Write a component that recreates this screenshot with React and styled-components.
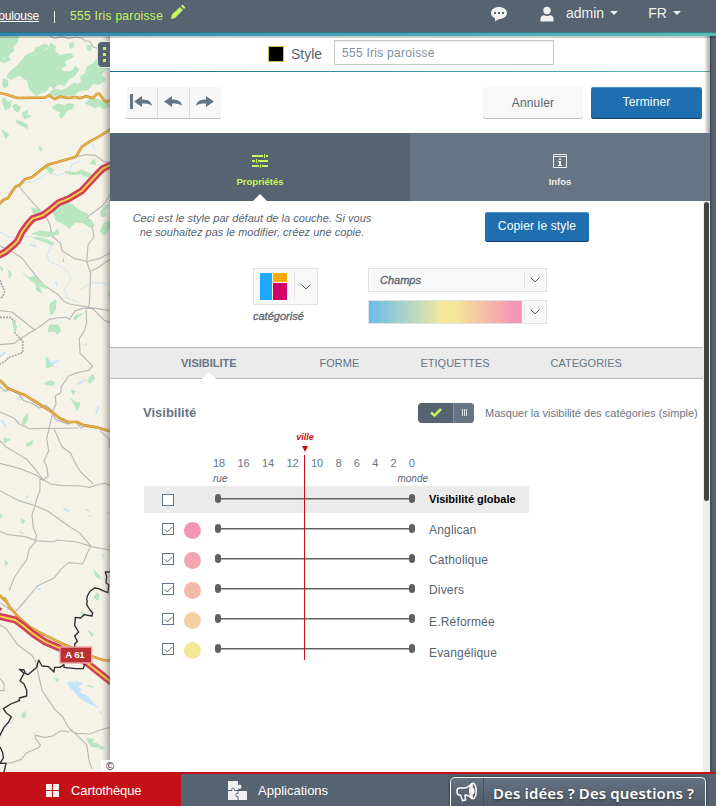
import React from "react";
import styled, { createGlobalStyle, css } from "styled-components";

const SLATE = "#566370";
const SLATE_LIGHT = "#667585";
const LIME = "#c5f560";
const RED = "#c41016";
const BLUE = "#1f6fb0";

const GlobalStyle = createGlobalStyle`
  * { box-sizing: border-box; }
  body {
    margin: 0;
    overflow: hidden;
    font-family: "Liberation Sans", Arial, sans-serif;
    color: ${SLATE};
  }
`;

const Page = styled.div`
  width: 716px;
  height: 806px;
  display: flex;
  flex-direction: column;
  overflow: hidden;
  background: ${SLATE};
`;

/* ---------- header ---------- */

const Header = styled.header`
  position: relative;
  z-index: 2;
  flex: none;
  height: 36px;
  display: flex;
  background: linear-gradient(90deg, #2e86b0, #3f9fb8 45%, #55c0b8) 0 33px / 100% 3px no-repeat,
    linear-gradient(90deg, #2a6f86, #35838a) 0 32px / 100% 1px no-repeat, ${SLATE};
  box-shadow: 0 2px 0 rgba(0, 0, 0, 0.2);
`;

const Crumbs = styled.div`
  display: flex;
  align-items: center;
  width: 487px;
  height: 32px;
  font-size: 12px;
  color: #fff;
`;

const CrumbLink = styled.a`
  display: flex;
  justify-content: flex-end;
  width: 39px;
  text-decoration: underline;
  letter-spacing: -0.2px;
`;

const Divider = styled.span`
  width: 1px;
  height: 12px;
  margin: 2px 15px 0 15px;
  background: #e8f4e8;
`;

const LayerName = styled.span`
  color: ${LIME};
  letter-spacing: 0.3px;
`;

const PencilIcon = styled.svg`
  width: 16px;
  height: 16px;
  margin: -8px 0 0 7px;
`;

const HeaderTools = styled.div`
  display: flex;
  align-items: center;
  height: 27px;
  color: #f1f1f1;
  font-size: 14px;
  padding-left: 3px;
`;

const HeaderIcon = styled.svg`
  width: ${(p) => p.$w}px;
  height: 16px;
  margin: 1px ${(p) => p.$gap}px 0 0;
`;

const MenuLabel = styled.span`
  display: flex;
  align-items: center;
  gap: 6px;
  margin: -2px 30px 0 0;
  &::after {
    content: "";
    border: 4px solid transparent;
    border-top-color: #f1f1f1;
    border-bottom: 0;
  }
`;

/* ---------- main ---------- */

const Main = styled.main`
  flex: none;
  height: 736px;
  display: flex;
`;

const MapPane = styled.section`
  position: relative;
  width: 110px;
  height: 736px;
  background: #f5f2e7;
  &::after {
    content: "";
    position: absolute;
    inset: 0 0 0 auto;
    width: 9px;
    background: linear-gradient(90deg, rgba(70, 70, 60, 0), rgba(70, 70, 60, 0.12) 45%, rgba(70, 70, 60, 0.42));
  }
`;

const MapDrawing = styled.svg`
  display: block;
`;

const DrawerHandle = styled.button`
  position: absolute;
  z-index: 1;
  top: 5px;
  right: 0;
  width: 13px;
  height: 27px;
  padding: 0 0 0 5px;
  border: 1px solid #dfe4e4;
  border-right: 0;
  border-radius: 5px 0 0 5px;
  background: ${SLATE};
  display: flex;
  flex-direction: column;
  justify-content: center;
  gap: 3px;
`;

const HandleDot = styled.span`
  width: 3px;
  height: 3px;
  background: ${LIME};
`;

const Attribution = styled.div`
  position: absolute;
  z-index: 1;
  left: 101px;
  bottom: 0;
  width: 18px;
  height: 12px;
  padding-left: 5px;
  font-size: 11px;
  line-height: 13px;
  color: #222;
  background: rgba(255, 255, 255, 0.85);
`;

const Panel = styled.section`
  width: 600px;
  display: flex;
  flex-direction: column;
  background: #fff;
`;

const Gutter = styled.div`
  position: relative;
  width: 6px;
  background: linear-gradient(90deg, #3f4a58, ${SLATE} 60%);
  &::before {
    content: "";
    position: absolute;
    top: 0;
    left: -6px;
    width: 6px;
    height: 97px;
    background: linear-gradient(90deg, rgba(80, 80, 80, 0), rgba(80, 80, 80, 0.5));
  }
`;

const TitleBar = styled.div`
  height: 36px;
  display: flex;
  align-items: center;
  padding: 0 0 2px 158px;
  background: linear-gradient(90deg, #14699f, #3b93ac 50%, #58b5ad) 0 100% / 100% 1px no-repeat;
`;

const Swatch = styled.span`
  width: 16px;
  height: 16px;
  margin-top: 2px;
  background: #000;
  border: 1px solid #cbc24e;
`;

const TitleLabel = styled.label`
  width: 43px;
  margin: 1px 0 0 7px;
  font-size: 14px;
`;

const TitleInput = styled.input`
  width: 220px;
  height: 25px;
  margin-top: -1px;
  padding: 0 7px;
  border: 1px solid #c8c8c8;
  box-shadow: inset 0 1px 2px rgba(0, 0, 0, 0.08);
  font: 12px "Liberation Sans", Arial, sans-serif;
  letter-spacing: 0.27px;
  color: #7a909d;
  outline: none;
`;

const Toolbar = styled.div`
  height: 61px;
  display: flex;
  align-items: flex-start;
  padding: 15px 8px 0 16px;
`;

const HistoryGroup = styled.div`
  display: flex;
  width: 95px;
  height: 32px;
  margin-right: auto;
  border-radius: 2px;
  background: #f7f7f7;
  border-bottom: 1px solid #bdbdbd;
`;

const HistoryButton = styled.button`
  flex: 1;
  padding: 0 2px 2px 0;
  border: 0;
  background: none;
  display: flex;
  align-items: center;
  justify-content: center;
  & + & {
    border-left: 1px solid #dcdcdc;
  }
`;

const Button = styled.button`
  width: ${(p) => p.$w}px;
  height: ${(p) => p.$h || 32}px;
  padding: 0 0 2px;
  border: 0;
  border-radius: 3px;
  font: 12px "Liberation Sans", Arial, sans-serif;
  letter-spacing: 0.15px;
  ${(p) =>
    p.$primary
      ? css`
          color: #fff;
          background: ${BLUE};
          box-shadow: inset 0 1px 0 #4a92cb, inset 0 -1px 0 #123f66;
        `
      : css`
          padding: 0 0 1px;
          margin-right: 8px;
          color: ${SLATE};
          background: #f8f8f8;
          box-shadow: inset 0 -1px 0 #bdbdbd;
        `}
`;

const MainTabs = styled.nav`
  height: 68px;
  display: flex;
`;

const MainTab = styled.button`
  position: relative;
  width: 300px;
  padding: 21px 0 0;
  border: 0;
  display: flex;
  flex-direction: column;
  align-items: center;
  gap: 7px;
  font: bold 9.5px "Liberation Sans", Arial, sans-serif;
  color: ${(p) => (p.$active ? LIME : "#eeeeea")};
  background: ${(p) => (p.$active ? SLATE : SLATE_LIGHT)};
  ${(p) =>
    p.$active &&
    css`
      &::after {
        content: "";
        position: absolute;
        bottom: 0;
        left: 143px;
        border: 7px solid transparent;
        border-bottom-color: #fff;
        border-top: 0;
      }
    `}
`;

const ScrollArea = styled.div`
  height: 571px;
  display: flex;
`;

const Content = styled.div`
  width: 593px;
`;

const ScrollTrack = styled.div`
  width: 7px;
  padding: 1px 1px 0 1px;
  background: #ededed;
`;

const ScrollThumb = styled.div`
  height: 299px;
  border-radius: 3px;
  background: #424242;
`;

const Notice = styled.div`
  height: 67px;
  display: flex;
  padding: 11px 0 0 17px;
`;

const NoticeText = styled.p`
  width: 250px;
  margin: -1px 108px 0 0;
  font-size: 11px;
  line-height: 14px;
  font-style: italic;
  text-align: center;
  white-space: nowrap;
  letter-spacing: 0.03px;
`;

const Selectors = styled.div`
  height: 79px;
  display: flex;
  padding-left: 143px;
`;

const KindColumn = styled.div`
  width: 115px;
`;

const FieldColumn = styled.div`
  display: flex;
  flex-direction: column;
  gap: 8px;
`;

const Select = styled.div`
  display: flex;
  align-items: center;
  width: ${(p) => p.$w}px;
  height: ${(p) => p.$h}px;
  border: 1px solid #e2e2e2;
  background: #f8f8f8;
`;

const SelectArrow = styled.span`
  margin-left: auto;
  width: ${(p) => p.$w}px;
  height: calc(100% - ${(p) => p.$inset || 6}px);
  padding-right: 1px;
  display: flex;
  align-items: center;
  justify-content: center;
  border-left: 1px solid #e2e2e2;
`;

const FieldValue = styled.span`
  padding-left: 11px;
  font-size: 11px;
  font-style: italic;
  -webkit-text-stroke: 0.3px ${SLATE};
`;

const KindLabel = styled.div`
  margin-top: 5px;
  font-size: 11px;
  font-style: italic;
  -webkit-text-stroke: 0.3px ${SLATE};
`;

const Mosaic = styled.span`
  display: grid;
  grid-template: 9px 17px / 12px 14px;
  gap: 1px;
  margin-left: 6px;
`;

const Tile = styled.span`
  background: ${(p) => p.$color};
  grid-row: ${(p) => p.$row};
`;

const Ramp = styled.span`
  width: 153px;
  height: 22px;
  background: linear-gradient(90deg, #6abcea, #b0d3c8 25%, #f3e89c 48%, #f6e59a 56%, #f4bfa5 75%, #f496b5 95%);
`;

const SubTabs = styled.nav`
  height: 32px;
  display: flex;
  padding-left: 71px;
  border: solid #b5b5b5;
  border-width: 1px 0;
  background: #ebebeb;
  font-size: 11px;
  line-height: 31px;
  color: ${SLATE_LIGHT};
`;

const SubTab = styled.a`
  position: relative;
  width: ${(p) => p.$w}px;
  ${(p) =>
    p.$active &&
    css`
      font-weight: bold;
      &::after {
        content: "";
        position: absolute;
        left: 21px;
        bottom: -1px;
        border: 7px solid transparent;
        border-bottom-color: #fff;
        border-top: 0;
      }
    `}
`;

const VisibilityHead = styled.div`
  height: 53px;
  display: flex;
  align-items: center;
  padding: 15px 0 0 33px;
  color: ${SLATE_LIGHT};
  font-size: 11px;
`;

const Heading = styled.h2`
  width: 275px;
  margin: -2px 0 0;
  font-size: 13px;
`;

const Toggle = styled.span`
  width: 56px;
  height: 20px;
  margin-right: 11px;
  display: flex;
  overflow: hidden;
  border-radius: 4px;
  background: ${SLATE};
`;

const ToggleSide = styled.span`
  width: ${(p) => p.$w}px;
  padding-bottom: 1px;
  display: flex;
  align-items: center;
  justify-content: center;
  ${(p) =>
    p.$knob &&
    css`
      border-left: 1px solid #8793a0;
      background: ${SLATE_LIGHT};
    `}
`;

const Chart = styled.div`
  position: relative;
  width: 385px;
  margin-left: 34px;
  padding-top: 24px;
`;

const Cursor = styled.div`
  position: absolute;
  top: -1px;
  left: 141px;
  width: 40px;
  height: 229px;
  display: flex;
  flex-direction: column;
  align-items: center;
  font: italic bold 9px/12px "Liberation Sans", Arial, sans-serif;
  color: ${RED};
`;

const CursorArrow = styled.span`
  margin: 3px 0 3px;
  border: 3px solid transparent;
  border-top: 6px solid ${RED};
  border-bottom: 0;
`;

const CursorLine = styled.span`
  flex: 1;
  width: 1px;
  margin-right: 1px;
  background: ${RED};
`;

const Scale = styled.div`
  width: 202px;
  margin-left: 69px;
  display: flex;
  justify-content: space-between;
  font-size: 11px;
  line-height: 14px;
  color: ${SLATE_LIGHT};
`;

const ScaleEnds = styled.div`
  width: 215px;
  margin: 2px 0 0 69px;
  height: 14px;
  padding-top: 1px;
  display: flex;
  justify-content: space-between;
  font: italic 10px/11px "Liberation Sans", Arial, sans-serif;
  color: ${SLATE};
`;

const Row = styled.div`
  height: ${(p) => (p.$global ? 27 : 30)}px;
  display: flex;
  align-items: center;
  padding-left: 18px;
  background: ${(p) => (p.$global ? "#ebebeb" : "none")};
`;

const Rows = styled.div`
  padding-top: 1px;
`;

const Checkbox = styled.span`
  width: 12px;
  height: 12px;
  display: flex;
  align-items: center;
  justify-content: center;
  border: 1px solid ${SLATE_LIGHT};
  background: #fff;
`;

const ColorDot = styled.span`
  width: 17px;
  height: 17px;
  margin: 2px 14px 0 10px;
  border-radius: 50%;
  background: ${(p) => p.$color || "transparent"};
`;

const Track = styled.span`
  width: 200px;
  height: 9px;
  margin-bottom: 2px;
  display: flex;
  align-items: center;
  justify-content: space-between;
  background: linear-gradient(#636363, #636363) 3px 4px / 193px 1.5px no-repeat;
`;

const Thumb = styled.span`
  width: 6px;
  height: 9px;
  border-radius: 3px;
  background: #606060;
`;

const RowLabel = styled.span`
  margin-left: 14px;
  padding-top: ${(p) => p.$drop || 0}px;
  white-space: nowrap;
  ${(p) =>
    p.$global
      ? css`
          margin-top: -2px;
          font: bold 11px "Liberation Sans", Arial, sans-serif;
          color: #000;
        `
      : css`
          font-size: 12px;
          letter-spacing: 0.18px;
        `}
`;

/* ---------- footer ---------- */

const Footer = styled.footer`
  position: relative;
  flex: none;
  height: 34px;
  display: flex;
  border-top: 2px solid ${RED};
  background: ${SLATE};
  font-size: 13px;
  color: #fff;
`;

const FooterTab = styled.a`
  width: ${(p) => p.$w}px;
  padding-left: 46px;
  display: flex;
  align-items: center;
  gap: ${(p) => p.$gap}px;
  letter-spacing: ${(p) => (p.$active ? "-0.1px" : "0")};
  background: ${(p) => (p.$active ? RED : "none")};
`;

const Feedback = styled.button`
  flex: none;
  width: 256px;
  height: 32px;
  margin-top: 3px;
  padding: 0;
  display: flex;
  border: 1px solid #f3f4f5;
  border-bottom: 0;
  border-radius: 5px 5px 0 0;
  background: linear-gradient(#657282, #4d5966);
  box-shadow: 0 0 3px rgba(0, 0, 0, 0.6);
  color: #fff;
`;

const FeedbackIcon = styled.span`
  flex: none;
  width: 33px;
  padding: 4px 0 0 5px;
  text-align: left;
  border-right: 1px solid #48535f;
`;

const FeedbackText = styled.span`
  padding: 2px 0 0 9px;
  font: 600 15px/26px "Noto Sans", "Open Sans", sans-serif;
  letter-spacing: 0.12px;
  white-space: nowrap;
  text-shadow: 0 1px 2px #333;
`;

/* ---------- drawings ---------- */

const Chevron = () => (
  <svg width="10" height="6" viewBox="0 0 10 6" fill="none" stroke="#526070">
    <path d="M.7.7 5 5 9.3.7" />
  </svg>
);

const Arrow = ({ flip, bar }) => (
  <svg width={bar ? 22 : 18} height="15" viewBox={bar ? "-4 0 22 15" : "0 0 18 15"} fill={SLATE_LIGHT}>
    {bar && <path d="M-4 0h3v15h-3z" />}
    <path
      transform={flip ? "translate(18 0) scale(-1 1)" : undefined}
      d="M0 7.5 8 2v3.5c6 0 9.5 2 10 6.5-2-2-5-2.500-10-2.500v3.500z"
    />
  </svg>
);

const SlidersIcon = () => (
  <svg width="17" height="15" viewBox="0 0 17 15" fill={LIME}>
    <path d="M0 1h11v2H0zM12 0h1v4h-1zM14 1h2v2h-2zM0 6h3v2H0zM4 5h1v4H4zM6 6h10v2H6zM0 11h7v2H0zM8 10h1v4H8zM10 11h6v2h-6z" />
  </svg>
);

const InfoIcon = () => (
  <svg width="15" height="15" viewBox="0 0 15 15" fill="none" stroke="#eeeeea">
    <path d="M.5.5h13v13H.5zM.5 2.500h13" />
    <path fill="#eeeeea" stroke="none" d="M6 4.500h2v1.500H6zM5 7h3v4h1v1H5v-1h1V8H5z" />
  </svg>
);

const Megaphone = () => (
  <svg width="22" height="21" viewBox="0 0 22 21" fill="none" stroke="#fff" strokeWidth="1.500" strokeLinejoin="round">
    <path d="M1 8.500c0-2 1-2.500 3-2.500h4c3 0 5-1.500 8-4.500v15c-3-3-4.500-3.500-7-3.500L9.500 18l-3 .8L4.500 13H3c-1.500 0-2-1.500-2-4.500z" />
    <ellipse cx="17" cy="9" rx="3.200" ry="7.800" />
    <ellipse cx="16.500" cy="9" rx="1.300" ry="2.500" fill="#fff" />
  </svg>
);

const GREEN = "#b8e6c1";
const Forest = ({ d }) => <path d={d} fill={GREEN} stroke={GREEN} strokeWidth="3" strokeLinejoin="round" />;
const Road = ({ d }) => <path d={d} stroke="#b9b9b9" strokeWidth="3.500" />;
const River = ({ d }) => <path d={d} stroke="#cbe5f7" strokeWidth="3" />;
const MainRoad = ({ d }) => (
  <g>
    <path d={d} stroke="#c88e2d" strokeWidth="8" />
    <path d={d} stroke="#eab54a" strokeWidth="4" />
  </g>
);
const Motorway = ({ d }) => (
  <g>
    <path d={d} stroke="#cd4355" strokeWidth="21" />
    <path d={d} stroke="#fbd44b" strokeWidth="5.500" />
  </g>
);
const Border = ({ d }) => <path d={d} stroke="#2b2b33" strokeWidth="4" />;

/* Each group uses a grid three times finer than a screen pixel. */
const MapView = () => (
  <MapDrawing width="110" height="736" viewBox="0 36 110 736" fill="none" strokeLinejoin="round">
    <g transform="scale(.33333)">
      <Forest d="M0 108h55l-3 20-14 12 4 12-14 10-6 14-14-4-8 6zM68 178l12-14 22-8 6-14 18-2 4 14 16-8 6-16 14 8-2 16 16 12 24-4 10 10-20 12 4 14-18 6 14 12 24-4 8-12 10 8-12 20-18 8-12 20-20-4-14 14-10-10-12 18-16 4-12 10-20-18-8-28-24-16-24 12-14-6 12-20 18-12z" />
      <Forest d="M146 282l18-16 22 6 22-12 12-10 14 4 10-8-2-18 14-8 6-20 20-10 6-12 18 2 8-12 16 6v30l-20 8-6 12 12 16-20 14-16-4-14 18-28 4-20 16-14-4-16 8z" />
      <Forest d="M256 310l16-16 22 4 18 8 18 6v8l-20 6-14-8-10 6-12-6zM156 322l18-10 20 6 10-8 18 4-4 12-16 4-8 12-8 12-8-6 6-12-18-6zM120 138l16-6 10 8-14 8zM208 130l12-2 2 10-12 8zM198 164l14-4 8 10-14 8zM262 136l12 2-2 14-10-2zM0 176l14 2 12-6 6 8-18 8-14-4zM10 236l12 4 2 18-12 6-4-12zM6 300l8-6 10 14 10-6-4 20-14 8zM38 318l10-6 14 10-8 14-10-6zM66 340l18-10-4 14 12 4-18 8zM48 362l14 2 20 10v12l-14-8-14-6zM178 344l14 -8 4 8-14 8z" />
      <Road d="M150 108l12 7 24-5 20 6 20-5 20 4 10 8 12 0 12 18 14 4 20-2" />
      <MainRoad d="M0 279 25 285 52 294 134 293 148 286 163 297 180 290 205 294 226 291 240 295 258 289 280 294 290 282 298 281 310 298 318 305 330 302" />
    </g>
    <g transform="translate(0 130) scale(.33333)">
      <River d="M252 45l20-10 14 26M0 306l30 16 60-2 66 22-14 34 4 18 30 12 24 14 14 26-20 30 6 26 34 14M240 480l34-22 46 2 10 8M60 160l36-4 26-12 20-18 30 10 34-8 10-24 28-14" />
      <Road d="M56 168l20 24 24 28 38 40 12 24 6 34 26 22 4 22 38 24 38 8 36-8 40-22 34-10M230 80l28-6 28 2 24 18 20 4M330 195l-24 34-20 14-24 18 16 36 4 24-18 24-4 50 12 34-4 96-8 14M272 424l20-10 38-26M0 348l32 14 34 22 26 34 40 48 40 26 20 22 16 8 120 20M0 542l36 4 68 54-44 26-16 14-44 4M104 600l26-18 18-14 22-4 28-2 10 6 18-26 28-8 24 2 34 34 35 16M258 540l2 38-8 26-14 22 2 44 38 38-12 12" />
      <path d="M0 450l8 20 6 16-6 14-8 6M0 562h30l14 12v34l24 26v34l-40 14-16 14-12 6" stroke="#a8a8ae" strokeWidth="5" strokeDasharray="6 3" />
      <Forest d="M157 240l18-16 26-6 20 8 14 14 28 12-6 18 14-2 12 20-14 4-20-14-20-2-14 10-6 10-10-10-16-8-14-6z" />
      <Forest d="M96 312l24-8 44 4 8-12 4 16-34 8zM98 322l28 2 34 14v8l-30-12zM194 124l34 4 18-8 32 16 8 10-24-6-20-8-32 2zM270 100l14-14 2 18-18-4zM130 112l16-2 16 10-10 12-8-12zM95 232l30 12-6 12-20-8zM302 242l14-16 12 2-14 12 4 18-14 2zM312 280l16-6v24l-16 18-12-12zM224 558l24-8-18 16-8 4zM70 430l18 14 18-6 16 20 14 8 6 10-18-6-8-4 10 24-16-10-2-20-14-8zM150 520l18-10-2 30-12 16-4-20zM150 585l24 0 8 16-10 12-8-10-20 2zM138 680l12 14 10 12-20 8zM6 0l20 14-8 12zM116 50l12 6-6 8z" />
      <Forest d="M0 410l8 4-2 8zM26 420l8 12-6 14zM36 570l14 18-4 18zM330 485l-6 10 6 8z" />
      <path d="M0 680l16-14M144 692l18 18M156 700l22-8M90 342l18 8M256 640l3 6M168 456l4 10" stroke="#bfe3fb" strokeWidth="6" />
      <path d="M190 386v10" stroke="#dfa69c" strokeWidth="3" />
      <MainRoad d="M-4 224 10 210 24 204 46 170 60 164 74 148 96 142 120 122 144 104 186 92 228 80 246 50 270 34 296 20 322 4 334 -4" />
      <Motorway d="M-4 376 16 366 44 342 52 334 66 306 82 284 98 266 128 256 150 240 176 218 206 206 246 182 268 158 294 130 308 116 334 104" />
    </g>
    <g transform="translate(0 370) scale(.33333)">
      <Road d="M270 0l-38 8-26 10-22 32-2 18-16 10 2 24-10 24-10 46-8 34 6 36-14 32 8 14 4 30-12 10-12 0 0 34-10 26-6 22-8 24 4 40 10 22-4 20-20 24-4 26-24 34-16 24-14 38M0 126l42 18 16 18 30 14 148-2M162 176l24 54 26 20 14 30 16 26 38 36M0 212l20 20 60 36 28 32 20 28 24 14 12 2 20 2 60 2 24 4 32-10 14-2 38 12M0 280l60 16 50 20 20 16M0 362l56 30 52 16 36 16 62 44 32 20 36 42 56 10M0 484l24 10 52 6 34 12 50 4 12-6 60 6 44 14M270 532l-22 50-42-4-24 20-20 26-50 24-34 42M300 182l28 26v26" />
      <path d="M0 50l14 14 16-6 26 14 14 20 28 8 20 14 20-8 14 12 14 30 38 14 20-8 20 20 14-10 60 14" stroke="#bcbcc0" strokeWidth="4" />
      <MainRoad d="M0 30 22 54 50 66 76 76 108 96 156 126 178 144 204 156 232 156 252 166 290 172 330 184M-4 674l22 20" />
      <Forest d="M262 32l16-20 6 14-14 14zM134 40l16-8 14 6-4 8-24-2zM214 60l12 4-6 10zM212 86l18 12 10 0-8 24-10-20zM84 130l-2 20-8 14-8-2 6-20zM12 204l20 4-18 10zM80 220l20-8-6 12-14 6zM0 432l8 4-6 8zM62 446l12 6-6 10zM58 484l12 6zM14 572l10 6-6 8zM256 416l10 8zM266 436l6 4zM282 600l16 16 4 10-14-6zM290 670l8 6-4 14-14-6z" />
      <path d="M232 42l24-12M296 108l-8 24M6 150l12 22M54 84l8 8M84 376l-4 10M190 416l16 8M306 552l6 10M320 428h8M112 656h10" stroke="#c5e5fa" strokeWidth="6" />
      <Border d="M330 606h-14l4 14-2 18 8 6-2 24-16-6-12-6-12-2-14 10-8 14-2 12" />
    </g>
    <g transform="translate(0 600) scale(.33333)">
      <Road d="M78 0 44 38 0 8M0 74l20 14 34 48 40 28 12 18 20 88 18 28 22 32 22 20 16 30 56 54 4 26 4 26 8 20M208 390l22 10 40 2 30-12 30-8M0 236l12 14v22H0M0 490l36-2 28-10 16-20 34-14 8-8-16-20 0-10 30 6 22-4 24-16 26 4" />
      <Forest d="M242 36l14 6-6 8zM264 92l16 10-4 8zM66 344l10-10 2 16-10 4zM260 416l20 2-4 12 14 0 4 12-18-2-10-12zM292 432l22 12-12 4zM164 234l14 4-8 8zM262 256l18 6zM298 334l6 8z" />
      <path d="M200 248l30-4 20 6-16 10 10 8-6 8 28 14 14 18 20 18-36-16-26-16-18-22-10-8z" fill="#c3e3fa" />
      <path d="M30 364l6 6M100 400h6" stroke="#c3e3fa" strokeWidth="4" />
      <MainRoad d="M12 -8 28 20 56 52 88 80 120 98 168 122 272 168 310 180 330 181" />
      <Motorway d="M-4 48 20 54 46 60 68 76 100 102 136 126 178 144 260 188 334 247" />
      <path d="M0 22l8 4-8 8z" fill="#cd4355" />
      <Border d="M262 0l-2 14 10 16 8 8-2 10-24-4-10 10-16-2-2 24 12 20-12 12 8 16-8 8 2 26M258 178l-8 28-24 0-34-4 0-8-12 8-16 0-2 14-16-16-20-2-10-18-6 22-26 22-8-4-4-10-14-2 14 12-12 22 12 10 8 18v18l-22 6v8l-26 10-22 14 8 12 16 12-8 16-14 16-14 28M0 440l8 18 2 16-10 16h18l-6 26" />
      <rect x="180" y="141" width="95" height="48" fill="#b93035" stroke="#eba4a4" strokeWidth="4" />
      <text x="196" y="175" fill="#fff" fontFamily="Liberation Sans, sans-serif" fontWeight="bold" fontSize="29" textLength="58">A 61</text>
    </g>
  </MapDrawing>
);

const layers = [
  { name: "Anglican", color: "#f496b3", drop: 1 },
  { name: "Catholique", color: "#f4a6ae", drop: 1 },
  { name: "Divers", color: "#f4b9a8", drop: 1 },
  { name: "E.Réformée", color: "#f6d09f", drop: 5 },
  { name: "Evangélique", color: "#f6e796", drop: 7 },
];

const LayerRow = ({ name, color, drop, global }) => (
  <Row $global={global}>
    <Checkbox>
      {!global && (
        <svg width="9" height="7" viewBox="0 0 9 7" fill="none" stroke={SLATE}>
          <path d="M.6 3.300 3.300 6 8.500.800" />
        </svg>
      )}
    </Checkbox>
    <ColorDot $color={color} />
    <Track>
      <Thumb />
      <Thumb />
    </Track>
    <RowLabel $global={global} $drop={drop}>{name}</RowLabel>
  </Row>
);

export default function App() {
  return (
    <Page>
      <GlobalStyle />
      <Header>
        <Crumbs>
          <CrumbLink>oulouse</CrumbLink>
          <Divider />
          <LayerName>555 Iris paroisse</LayerName>
          <PencilIcon viewBox="0 0 16 16" fill={LIME}>
            <path d="M1 15l1-4.500L10 3l3 3-8 8zM11 2l1.500-1.500 3 3L14 5z" />
          </PencilIcon>
        </Crumbs>
        <HeaderTools>
          <HeaderIcon $w={18} $gap={32} viewBox="0 0 18 16">
            <path d="M9 1c4.500 0 8 2.500 8 6s-3.500 6-8 6L5 15.500V12.300C2.500 11.300 1 9.300 1 7c0-3.500 3.500-6 8-6z" fill="#f1f1f1" />
            <path d="M4 6h2v2H4zM8 6h2v2H8zM12 6h2v2h-2z" fill={SLATE} />
          </HeaderIcon>
          <HeaderIcon $w={14} $gap={12} viewBox="0 0 14 16" fill="#f1f1f1">
            <circle cx="7" cy="4.500" r="3.700" />
            <path d="M.5 15.500v-3C.5 10.500 2 9.500 4 9.200c2 1 4 1 6 0 2 .3 3.500 1.300 3.500 3.300v3z" />
          </HeaderIcon>
          <MenuLabel>admin</MenuLabel>
          <MenuLabel>FR</MenuLabel>
        </HeaderTools>
      </Header>

      <Main>
        <MapPane>
          <MapView />
          <DrawerHandle>
            <HandleDot />
            <HandleDot />
            <HandleDot />
          </DrawerHandle>
          <Attribution>©</Attribution>
        </MapPane>

        <Panel>
          <TitleBar>
            <Swatch />
            <TitleLabel>Style</TitleLabel>
            <TitleInput defaultValue="555 Iris paroisse" />
          </TitleBar>
          <Toolbar>
            <HistoryGroup>
              <HistoryButton><Arrow bar /></HistoryButton>
              <HistoryButton><Arrow /></HistoryButton>
              <HistoryButton><Arrow flip /></HistoryButton>
            </HistoryGroup>
            <Button $w={100}>Annuler</Button>
            <Button $w={111} $primary>Terminer</Button>
          </Toolbar>
          <MainTabs>
            <MainTab $active><SlidersIcon />Propriétés</MainTab>
            <MainTab><InfoIcon />Infos</MainTab>
          </MainTabs>
          <ScrollArea>
            <Content>
              <Notice>
                <NoticeText>
                  Ceci est le style par défaut de la couche. Si vous
                  <br />
                  ne souhaitez pas le modifier, créez une copie.
                </NoticeText>
                <Button $w={104} $h={30} $primary>Copier le style</Button>
              </Notice>
              <Selectors>
                <KindColumn>
                  <Select $w={65} $h={37}>
                    <Mosaic>
                      <Tile $color="#1aa9ff" $row="1 / 3" />
                      <Tile $color="#f5ab00" />
                      <Tile $color="#d0006a" />
                    </Mosaic>
                    <SelectArrow $w={23} $inset={8}><Chevron /></SelectArrow>
                  </Select>
                  <KindLabel>catégorisé</KindLabel>
                </KindColumn>
                <FieldColumn>
                  <Select $w={179} $h={24}>
                    <FieldValue>Champs</FieldValue>
                    <SelectArrow $w={22}><Chevron /></SelectArrow>
                  </Select>
                  <Select $w={179} $h={24}>
                    <Ramp />
                    <SelectArrow $w={22}><Chevron /></SelectArrow>
                  </Select>
                </FieldColumn>
              </Selectors>
              <SubTabs>
                <SubTab $w={138.5} $active>VISIBILITE</SubTab>
                <SubTab $w={101}>FORME</SubTab>
                <SubTab $w={130}>ETIQUETTES</SubTab>
                <SubTab $w={80}>CATEGORIES</SubTab>
              </SubTabs>
              <VisibilityHead>
                <Heading>Visibilité</Heading>
                <Toggle>
                  <ToggleSide $w={35}>
                    <svg width="12" height="9" viewBox="0 0 12 9" fill="none" stroke={LIME} strokeWidth="2.500">
                      <path d="M1 4.500 4.500 7.500 11 1" />
                    </svg>
                  </ToggleSide>
                  <ToggleSide $w={21} $knob>
                    <svg width="5" height="7" viewBox="0 0 5 7" fill="#dfe2e6">
                      <path d="M0 0h1v7H0zM2 0h1v7H2zM4 0h1v7H4z" />
                    </svg>
                  </ToggleSide>
                </Toggle>
                <span>Masquer la visibilité des catégories (simple)</span>
              </VisibilityHead>
              <Chart>
                <Scale>
                  {[18, 16, 14, 12, 10, 8, 6, 4, 2, 0].map((n) => (
                    <span key={n}>{n}</span>
                  ))}
                </Scale>
                <ScaleEnds>
                  <span>rue</span>
                  <span>monde</span>
                </ScaleEnds>
                <LayerRow name="Visibilité globale" global />
                <Rows>
                  {layers.map((l) => (
                    <LayerRow key={l.name} {...l} />
                  ))}
                </Rows>
                <Cursor>
                  ville
                  <CursorArrow />
                  <CursorLine />
                </Cursor>
              </Chart>
            </Content>
            <ScrollTrack>
              <ScrollThumb />
            </ScrollTrack>
          </ScrollArea>
        </Panel>
        <Gutter />
      </Main>

      <Footer>
        <FooterTab $w={181} $gap={12} $active>
          <svg width="13" height="13" viewBox="0 0 13 13" fill="#f1f1f1">
            <path d="M0 0h6v6H0zM7 0h6v6H7zM0 7h6v6H0zM7 7h6v6H7z" />
          </svg>
          Cartothèque
        </FooterTab>
        <FooterTab $w={269} $gap={9}>
          <svg width="22" height="21" viewBox="0 0 22 21">
            <path d="M1 1h10v4c3-2 5 2 2 4l-2-.5V11h9v9H1z" fill="#f1f1f1" />
            <path d="M1 10.500h4c-1.500-3 3-3 2.500 0H11v3c-3-1-3 3.500 0 3V20" fill="none" stroke={SLATE} />
          </svg>
          Applications
        </FooterTab>
        <Feedback>
          <FeedbackIcon><Megaphone /></FeedbackIcon>
          <FeedbackText>Des idées ? Des questions ?</FeedbackText>
        </Feedback>
      </Footer>
    </Page>
  );
}
